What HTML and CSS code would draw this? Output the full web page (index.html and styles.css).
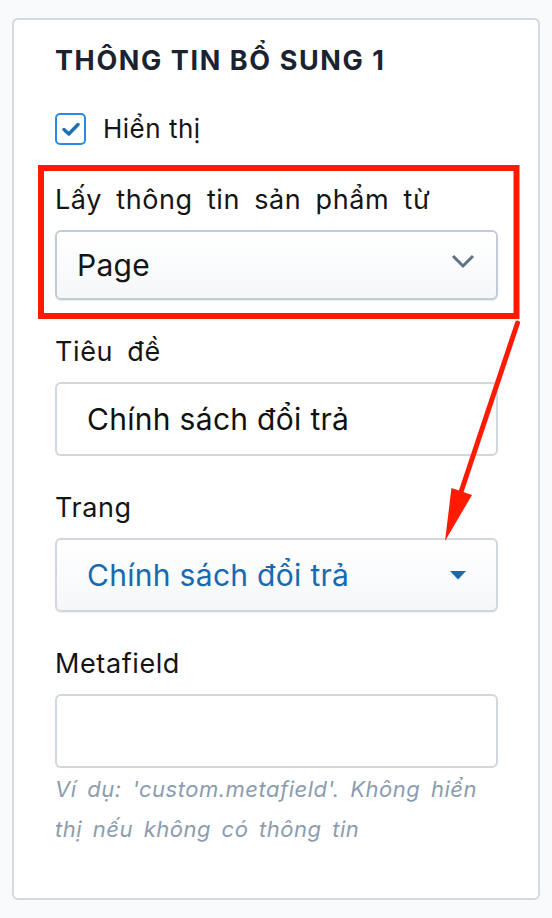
FILE: index.html
```html
<!DOCTYPE html>
<html lang="vi">
<head>
  <meta charset="UTF-8">
  <meta name="viewport" content="width=device-width, initial-scale=1.0">
  <title>Thông tin bổ sung</title>
  <link rel="stylesheet" href="styles.css">
</head>
<body>
  <!-- Khối cài đặt -->
  <div class="panel">
    <h2 class="panel-title">THÔNG TIN BỔ SUNG 1</h2>

    <!-- Hiển thị -->
    <label class="check">
      <span class="check-box">
        <svg width="18" height="14" viewBox="0 0 18 14"><path d="M2 7.5 L6.8 12 L16 2.5" fill="none" stroke="#1d6fb5" stroke-width="3.4" stroke-linecap="round" stroke-linejoin="round"/></svg>
      </span>
      <span>Hiển thị</span>
    </label>

    <!-- Nguồn thông tin -->
    <div class="field field-first">
      <div class="field-label">Lấy thông tin sản phẩm từ</div>
      <div class="select select-native">
        <span>Page</span>
        <svg class="chevron" width="24" height="15" viewBox="0 0 24 15"><path d="M2 2 L12 12 L22 2" fill="none" stroke="#5f7184" stroke-width="3"/></svg>
      </div>
    </div>

    <!-- Tiêu đề -->
    <div class="field">
      <div class="field-label">Tiêu đề</div>
      <div class="input">Chính sách đổi trả</div>
    </div>

    <!-- Trang -->
    <div class="field">
      <div class="field-label">Trang</div>
      <div class="select select-page">
        <span>Chính sách đổi trả</span>
        <svg class="caret" width="16" height="9" viewBox="0 0 16 9"><path d="M0 0 H16 L8 8.5 Z" fill="#1769b0"/></svg>
      </div>
    </div>

    <!-- Metafield -->
    <div class="field">
      <div class="field-label">Metafield</div>
      <div class="input input-empty"></div>
      <p class="help">Ví dụ: 'custom.metafield'. Không hiển thị nếu không có thông tin</p>
    </div>
  </div>

  <!-- Chú thích màu đỏ -->
  <svg class="annotation" width="552" height="918" viewBox="0 0 552 918">
    <rect x="41" y="168" width="475.5" height="148" fill="none" stroke="#ff1a00" stroke-width="6"/>
    <line x1="517.5" y1="323" x2="461" y2="492" stroke="#ff1a00" stroke-width="5" stroke-linecap="round"/>
    <path d="M451.5 488 L472 495 L445 541 Z" fill="#ff1a00"/>
  </svg>
</body>
</html>
```

FILE: styles.css
```css
/* Trang */
body {
  margin: 0;
  background: #f7f9fb;
  font-family: Inter, "Noto Sans", sans-serif;
  color: #151515;
  position: relative;
}

/* Khung chính */
.panel {
  margin: 18px 12px 0;
  height: 882px;
  box-sizing: border-box;
  background: #fff;
  border: 2px solid #d2d9e1;
  border-radius: 6px;
  padding: 25px 40px 0 41px;
}

.panel-title {
  margin: 0;
  font-size: 27px;
  line-height: 32px;
  font-weight: 700;
  letter-spacing: 1.6px;
  color: #1b2330;
}

/* Checkbox */
.check {
  display: flex;
  align-items: center;
  gap: 17px;
  margin-top: 34px;
  font-size: 26px;
  line-height: 36px;
  letter-spacing: 0.5px;
}

.check-box {
  width: 27px;
  height: 28px;
  border: 2px solid #2a8ae8;
  border-radius: 5px;
  display: flex;
  align-items: center;
  justify-content: center;
}

/* Trường nhập */
.field {
  margin-top: 34px;
}

.field-first {
  margin-top: 35px;
}

.field-label {
  font-size: 27px;
  line-height: 36px;
  letter-spacing: 0.6px;
  word-spacing: 6px;
  margin-bottom: 12px;
}

.input,
.select {
  box-sizing: border-box;
  height: 74px;
  border: 2px solid #d0d7df;
  border-radius: 6px;
  display: flex;
  align-items: center;
  font-size: 30px;
  letter-spacing: 0.3px;
  padding-left: 30px;
}

.input {
  background: #fff;
  color: #111;
}

.select {
  justify-content: space-between;
  background: linear-gradient(#ffffff, #f5f7f9);
}

.select-native {
  height: 70px;
  padding: 0 21px 0 20px;
  border-color: #c2ccd6;
  box-shadow: 0 1px 1px rgba(40, 60, 80, 0.12);
}

.select-native .chevron {
  margin-top: -8px;
}

.select-page {
  color: #1769b0;
  padding-right: 30px;
  box-shadow: 0 1px 1px rgba(40, 60, 80, 0.08);
}

.help {
  margin: 1px 0 0;
  font-size: 22px;
  line-height: 40px;
  letter-spacing: 0.5px;
  word-spacing: 4px;
  font-style: italic;
  color: #8b9cb0;
}

/* Chú thích */
.annotation {
  position: absolute;
  top: 0;
  left: 0;
  pointer-events: none;
}
```
